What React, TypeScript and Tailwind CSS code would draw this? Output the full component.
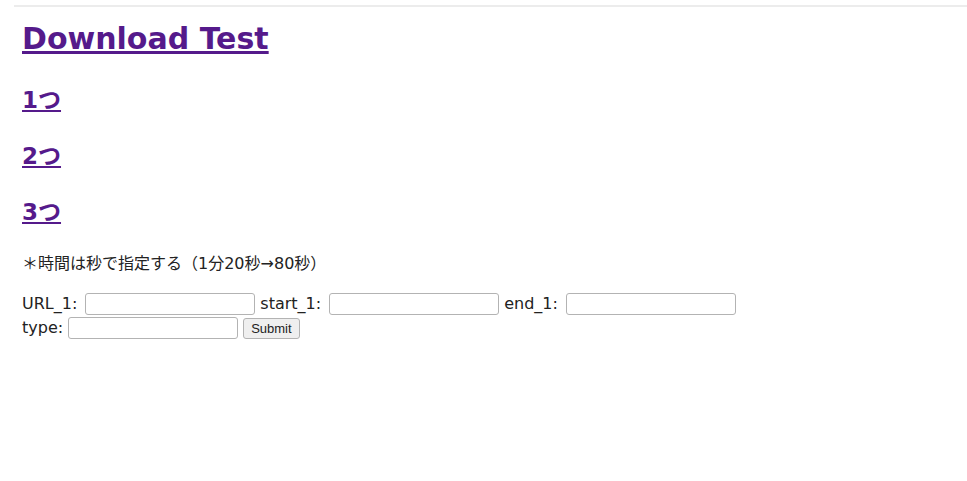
import React from "react";

const font = { fontFamily: '"DejaVu Sans", "Noto Sans CJK JP", sans-serif' };

function Field({ tight = false }: { tight?: boolean }) {
  return (
    <input
      className={
        tight
          ? "ml-[5px] w-[170px] h-[22px] border border-[#b3b3b3] rounded-[3px] bg-white"
          : "ml-[8px] w-[170px] h-[22px] border border-[#b3b3b3] rounded-[3px] bg-white"
      }
    />
  );
}

export default function App() {
  return (
    <div className="w-[967px] h-[481px] bg-white overflow-hidden" style={font}>
      <div className="pt-[5px] pl-[14px]">
        <div className="h-[2px] bg-[#ececec]" />
      </div>
      <div className="pl-[22px] text-black">
        <h1 className="mt-[14px] text-[30px] font-bold leading-[36px]">
          <a href="#" className="underline text-[#551a8b]">Download Test</a>
        </h1>
        <h2 className="mt-[28px] text-[23px] font-bold leading-[30px]">
          <a href="#" className="underline text-[#551a8b]">1つ</a>
        </h2>
        <h2 className="mt-[26px] text-[23px] font-bold leading-[30px]">
          <a href="#" className="underline text-[#551a8b]">2つ</a>
        </h2>
        <h2 className="mt-[26px] text-[23px] font-bold leading-[30px]">
          <a href="#" className="underline text-[#551a8b]">3つ</a>
        </h2>
        <p className="mt-[25px] text-[16px] leading-[24px] text-[#222]">＊時間は秒で指定する（1分20秒→80秒）</p>
        <form className="mt-[16px] text-[16px] leading-[24px] text-[#222]">
          <div className="flex items-center h-[24px]">
            <span>URL_1:</span>
            <Field />
            <span className="ml-[5px]">start_1:</span>
            <Field />
            <span className="ml-[5px]">end_1:</span>
            <Field />
          </div>
          <div className="flex items-center h-[24px]">
            <span>type:</span>
            <Field tight />
            <button type="button" className="ml-[5px] h-[21px] px-[7px] border border-[#b3b3b3] rounded-[3px] bg-[#efefef] text-[13px] leading-[19px] text-[#222]" style={{ fontFamily: '"Liberation Sans", Arial, sans-serif' }}>Submit</button>
          </div>
        </form>
      </div>
    </div>
  );
}
